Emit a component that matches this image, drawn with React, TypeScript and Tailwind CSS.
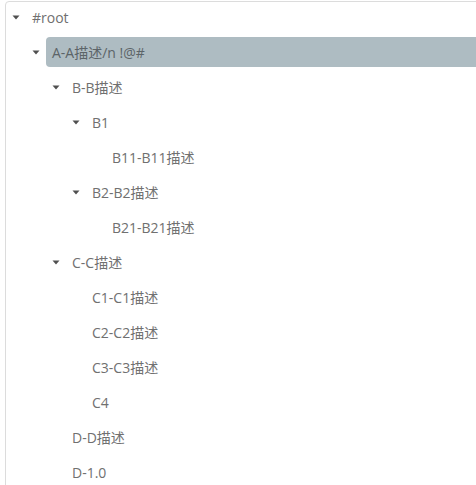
import React from 'react';

type Node = {
  label: string;
  level: number;
  open?: boolean;
  selected?: boolean;
};

const rows: Node[] = [
  { label: '#root', level: 0, open: true },
  { label: 'A-A描述/n !@#', level: 1, open: true, selected: true },
  { label: 'B-B描述', level: 2, open: true },
  { label: 'B1', level: 3, open: true },
  { label: 'B11-B11描述', level: 4 },
  { label: 'B2-B2描述', level: 3, open: true },
  { label: 'B21-B21描述', level: 4 },
  { label: 'C-C描述', level: 2, open: true },
  { label: 'C1-C1描述', level: 3 },
  { label: 'C2-C2描述', level: 3 },
  { label: 'C3-C3描述', level: 3 },
  { label: 'C4', level: 3 },
  { label: 'D-D描述', level: 2 },
  { label: 'D-1.0', level: 2 },
];

function Caret() {
  return (
    <svg width="8" height="5" viewBox="0 0 8 5" className="block">
      <path d="M0.5 0.5 L7.5 0.5 L4 4.5 Z" fill="#505050" />
    </svg>
  );
}

export default function App() {
  return (
    <div
      className="w-[476px] h-[485px] overflow-hidden bg-white"
      style={{ fontFamily: '"Open Sans", "Noto Sans CJK SC", sans-serif' }}
    >
      <div className="ml-[5px] mt-[1px] w-[600px] h-[600px] border border-[#dcdcdc] rounded-[4px]">
        <div className="flex flex-col gap-[5px]">
          {rows.map((row) => (
            <div
              key={row.label}
              className="flex items-center h-[30px] text-[14px] text-[#707070]"
              style={{ paddingLeft: row.level * 20 }}
            >
              <span className="w-[20px] h-[30px] flex items-center justify-center shrink-0">
                {row.open && <Caret />}
              </span>
              <span
                className={
                  'flex-1 h-[30px] flex items-center px-[6px] rounded-l-[4px] ' +
                  (row.selected ? 'bg-[#aebcc2] text-[#5c6468]' : '')
                }
              >
                {row.label}
              </span>
            </div>
          ))}
        </div>
      </div>
    </div>
  );
}
